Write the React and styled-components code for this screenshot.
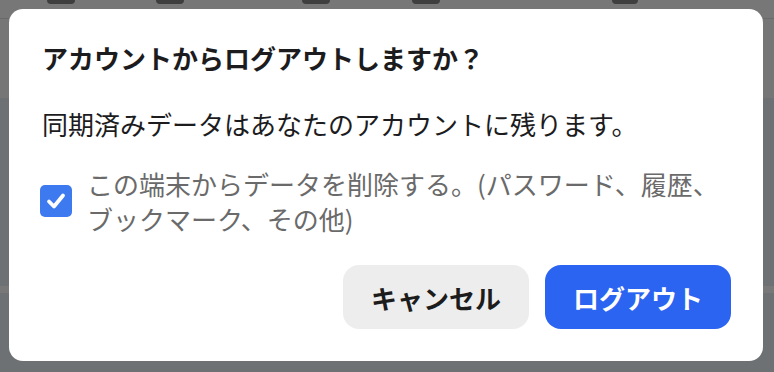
import React from "react";
import styled, { createGlobalStyle } from "styled-components";

const Global = createGlobalStyle`
  html, body { margin: 0; padding: 0; }
  body {
    width: 774px;
    height: 372px;
    overflow: hidden;
    font-family: "Noto Sans CJK JP", "Noto Sans", sans-serif;
  }
`;

const Screen = styled.div`
  position: relative;
  width: 774px;
  height: 372px;
  overflow: hidden;
  display: flex;
  flex-direction: column;
  background: #6d7174;
`;

const TopBar = styled.div`
  height: 18px;
  background: #777777;
  display: flex;
  align-items: flex-start;
  padding-left: 47px;
  border-bottom: 1px solid #6a6a6a;
`;

const Pill = styled.div`
  width: ${(p) => p.$w || 27}px;
  height: 4px;
  margin-left: ${(p) => p.$ml || 0}px;
  background: #3e3e3e;
  border-radius: 0 0 4px 4px;
`;

const GreySection = styled.div`
  height: 79px;
  background: #767676;
`;

const BlueSection = styled.div`
  height: 188px;
  background: #6d7174;
`;

const Band = styled.div`
  height: 7px;
  background: #787878;
`;

const Dialog = styled.div`
  position: absolute;
  left: 9px;
  top: 9px;
  width: 754px;
  height: 352px;
  box-sizing: border-box;
  background: #ffffff;
  border-radius: 14px;
  padding: 32px 32px 32px 33px;
  display: flex;
  flex-direction: column;
`;

const Title = styled.h2`
  margin: 0;
  font-size: 26px;
  line-height: 34px;
  font-weight: 700;
  color: #1c1c1e;
`;

const Body = styled.p`
  margin: 31px 0 0;
  font-size: 26px;
  line-height: 35px;
  font-weight: 400;
  color: #1c1c1e;
`;

const CheckRow = styled.label`
  margin-top: 25px;
  margin-left: -2px;
  display: flex;
  align-items: center;
  gap: 15px;
  cursor: pointer;
`;

const Box = styled.span`
  flex: 0 0 auto;
  width: 32px;
  height: 32px;
  border-radius: 5px;
  background: #3d79ef;
  display: flex;
  align-items: center;
  justify-content: center;
`;

const CheckLabel = styled.span`
  flex: 1 1 auto;
  font-size: 26px;
  line-height: 35px;
  color: #6a6a6a;
`;

const Actions = styled.div`
  margin-top: auto;
  display: flex;
  justify-content: flex-end;
  gap: 16px;
`;

const Button = styled.button`
  width: 186px;
  height: 64px;
  border: none;
  border-radius: 16px;
  font-family: inherit;
  font-size: 26px;
  font-weight: 700;
  background: ${(p) => (p.$primary ? "#2b64f0" : "#ededed")};
  color: ${(p) => (p.$primary ? "#ffffff" : "#1c1c1c")};
  cursor: pointer;
`;

export default function App() {
  return (
    <>
      <Global />
      <Screen>
        <TopBar>
          <Pill $w={28} />
          <Pill $w={28} $ml={81} />
          <Pill $w={28} $ml={118} />
          <Pill $w={28} $ml={82} />
          <Pill $w={26} $ml={172} />
        </TopBar>
        <GreySection />
        <BlueSection />
        <Band />
        <Dialog>
          <Title>アカウントからログアウトしますか？</Title>
          <Body>同期済みデータはあなたのアカウントに残ります。</Body>
          <CheckRow>
            <Box>
              <svg width="22" height="22" viewBox="0 0 22 22" fill="none">
                <path
                  d="M4 11.5 L9 16.5 L18 5.5"
                  stroke="#ffffff"
                  strokeWidth="3.8"
                  strokeLinecap="round"
                  strokeLinejoin="round"
                />
              </svg>
            </Box>
            <CheckLabel>この端末からデータを削除する。(パスワード、履歴、ブックマーク、その他)</CheckLabel>
          </CheckRow>
          <Actions>
            <Button>キャンセル</Button>
            <Button $primary>ログアウト</Button>
          </Actions>
        </Dialog>
      </Screen>
    </>
  );
}
